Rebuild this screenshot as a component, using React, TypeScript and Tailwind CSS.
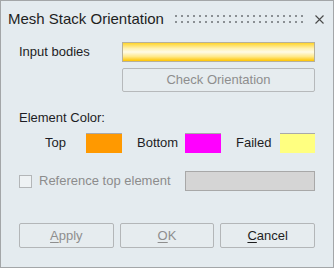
import React from 'react'

const font = { fontFamily: '"Liberation Sans", Arial, sans-serif' }

function Grip() {
  const dots = []
  for (let r = 0; r < 2; r++) {
    for (let c = 0; c < 22; c++) {
      dots.push(<rect key={`${r}-${c}`} x={c * 6} y={r * 6} width="2" height="2" fill="#8a8f93" />)
    }
  }
  return (
    <svg width="128" height="8" viewBox="0 0 128 8">
      {dots}
    </svg>
  )
}

function Swatch({ color }: { color: string }) {
  return <div className={`h-[20px] border-t border-[#a9a9a9] ${color}`} />
}

function DialogButton({ label, under, rest, enabled }: { label: string; under: string; rest: string; enabled?: boolean }) {
  return (
    <button
      aria-label={label}
      className={`w-[95px] h-[25px] rounded-[2px] border border-[#b3b6b8] bg-[#e6ecef] text-[13px] ${enabled ? 'text-[#1e1e1e]' : 'text-[#8e8e8e]'}`}
    >
      <span className="underline underline-offset-2">{under}</span>
      {rest}
    </button>
  )
}

export default function App() {
  return (
    <div style={font} className="w-[334px] h-[268px] bg-[#e4ebef] border border-[#a3a6a8] flex flex-col">
      {/* title bar */}
      <div className="h-[36px] flex items-center pl-[7px] pr-[9px]">
        <span className="text-[15px] text-[#1e1e1e] pt-[1px]">Mesh Stack Orientation</span>
        <div className="ml-auto flex items-center gap-[12px]">
          <Grip />
          <svg width="9" height="9" viewBox="0 0 9 9" className="mb-[-1px]">
            <path d="M0.5 0.5 L8.5 8.5 M8.5 0.5 L0.5 8.5" stroke="#4a4a4a" strokeWidth="1.1" />
          </svg>
        </div>
      </div>

      <div className="px-[18px] flex flex-col text-[13px] text-[#1d1d24]">
        {/* input bodies */}
        <div className="mt-[5px] flex items-center">
          <span className="w-[103px]">Input bodies</span>
          <div className="flex-1 h-[20px] border border-[#b6b09a] bg-[linear-gradient(to_bottom,#ffd42a_0%,#fff1b0_30%,#fffbe6_50%,#ffe98a_75%,#ffc400_100%)]" />
        </div>
        <div className="mt-[6px] flex">
          <button className="ml-[103px] flex-1 h-[24px] rounded-[2px] border border-[#b6b9bb] bg-[#e6ecef] text-[#8e8e8e] text-[13px]">
            Check Orientation
          </button>
        </div>

        {/* element color */}
        <div className="mt-[18px] leading-[16px]">Element Color:</div>
        <div className="mt-[7px] flex items-center pl-[26px]">
          <span className="w-[41px]">Top</span>
          <div className="w-[36px]">
            <Swatch color="bg-[#ff9900]" />
          </div>
          <span className="ml-[15px] w-[48px]">Bottom</span>
          <div className="w-[36px]">
            <Swatch color="bg-[#ff00ff]" />
          </div>
          <span className="ml-[15px] w-[44px]">Failed</span>
          <div className="flex-1">
            <Swatch color="bg-[#ffff80]" />
          </div>
        </div>

        {/* reference */}
        <div className="mt-[18px] flex items-center text-[#8c8c8c]">
          <div className="w-[13px] h-[13px] border border-[#b3b6b8] bg-[#eef2f4]" />
          <span className="ml-[7px] w-[146px]">Reference top element</span>
          <div className="flex-1 h-[20px] border border-[#a8a8a8] bg-[#d5d5d5]" />
        </div>

        {/* buttons */}
        <div className="mt-[32px] flex gap-[6px]">
          <DialogButton label="Apply" under="A" rest="pply" />
          <DialogButton label="OK" under="O" rest="K" />
          <DialogButton label="Cancel" under="C" rest="ancel" enabled />
        </div>
      </div>
    </div>
  )
}
